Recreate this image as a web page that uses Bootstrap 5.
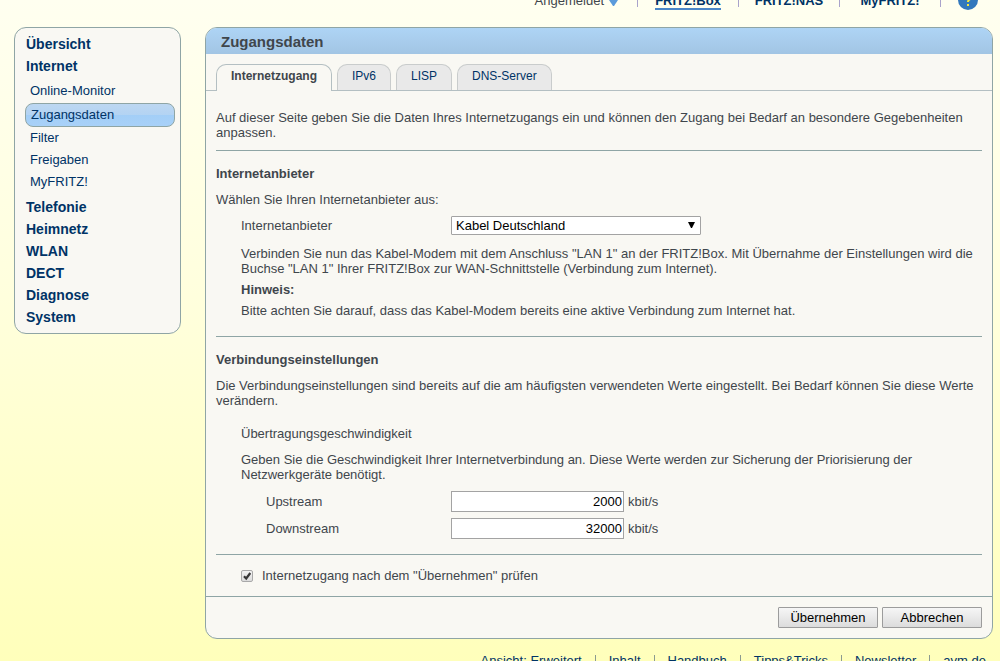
<!DOCTYPE html>
<html lang="de">
<head>
<meta charset="utf-8">
<meta name="viewport" content="width=device-width, initial-scale=1">
<title>FRITZ!Box – Zugangsdaten</title>
<link href="https://cdn.jsdelivr.net/npm/bootstrap@5.3.0/dist/css/bootstrap.min.css" rel="stylesheet">
<style>
  :root { --navy: #003366; --line: #8fa5a5; --panel: #f9f8f3; }
  html { height: 100%; }
  body {
    min-height: 100%;
    font: 13px/15px "Liberation Sans", Arial, sans-serif;
    color: #3f464c;
    background: #ffffbb linear-gradient(#fffff0, #ffffdd 45%, #ffffbb) no-repeat;
    overflow: hidden;
  }
  a { color: var(--navy); text-decoration: none; }
  a:hover { text-decoration: underline; }
  p { margin: 0; }

  /* top bar, scrolled partly out of view */
  .top-bar { height: 37px; margin-top: -10px; padding-right: 22px; }
  .top-bar .divider { width: 1px; height: 14px; margin-top: 3px; background: #a9a3cb; }
  .top-bar .current { border-bottom: 2px solid #4a86c8; }
  .top-item { padding-top: 3px; }
  .top-cell { width: 100px; }
  .user-link { color: #3f464c; padding-right: 18px; }
  .help-link { line-height: 0; padding-left: 17px; }

  .page-row { padding: 0 7px 0 14px; gap: 24px; }
  .box { background: var(--panel); border: 1px solid var(--line); border-radius: 12px; }

  /* side menu */
  .side-menu { width: 167px; padding: 5px 5px 5px 10px; }
  .side-menu a { display: block; height: 22px; line-height: 22px; }
  .side-menu .main-entry { font-size: 14px; font-weight: bold; padding-left: 1px; }
  .side-menu .sub-entries { padding: 3px 0; }
  .side-menu .sub-entries a { padding-left: 5px; }
  .side-menu .sub-entries a.current {
    height: 24px;
    margin-top: 1px;
    border: 1px solid var(--line);
    border-radius: 8px;
    background: linear-gradient(#bdd7f1, #b3d3f3 50%, #a3cef7 50%, #a8d1f8);
  }

  /* content */
  .page-title {
    margin: 0; padding: 1px 15px 0;
    font-size: 15px; line-height: 25px; font-weight: bold;
    border-radius: 11px 11px 0 0;
    background: linear-gradient(#aed4f5, #a2c5e4);
  }
  .tab-strip { gap: 5px; padding: 10px 10px 0; border-bottom: 1px solid #b4bfc2; font-size: 12px; }
  .tab-strip .nav-link {
    height: 26px; padding: 4px 14px;
    color: var(--navy); background: #e9e9e9;
    border: 1px solid #c9cccc; border-bottom: 0;
    border-radius: 10px 10px 0 0;
  }
  .tab-strip .nav-link.active {
    height: 27px; margin-bottom: -1px;
    color: #3f464c; background: var(--panel); border-color: #b4bfc2;
    font-weight: bold;
  }
  .panel-body { padding: 19px 10px 13px; }
  .panel-body hr { margin: 0; border-top: 1px solid var(--line); opacity: 1; }
  .panel-body h2 { margin: 0; padding: 15px 0 11px; font-size: 13px; line-height: 15px; font-weight: bold; }
  .intro { padding-bottom: 10px; }
  .indent { padding-left: 25px; }
  .provider-block { padding-top: 9px; padding-bottom: 18px; }
  .provider-row { padding-bottom: 11px; }
  .hint-stack { gap: 6px; }
  .speed-block { padding-top: 18px; padding-bottom: 15px; }
  .speed-title { padding-bottom: 11px; }
  .speed-rows { padding-top: 9px; gap: 6px; }
  .verify-row { padding-top: 13px; gap: 9px; }
  .label-wide { width: 210px; }
  .label-narrow { width: 185px; }

  .provider-select {
    width: 250px; height: 19px; padding: 0 4px;
    font-size: 13px; line-height: 17px; color: #000;
    border: 1px solid #a3a3a3; border-radius: 1px; background-color: #fff;
    background-image: url("data:image/svg+xml,%3Csvg xmlns='http://www.w3.org/2000/svg' width='7' height='6'%3E%3Cpath d='M0 0h7L4 6H3z'/%3E%3C/svg%3E");
    background-repeat: no-repeat; background-size: 7px 6px; background-position: right 5px top 5px;
    appearance: none;
  }
  .speed-input {
    width: 173px; height: 21px; padding: 1px;
    color: #000; text-align: right;
    border: 1px solid #a3a3a3; background: #fff;
  }
  .check-box {
    width: 12px; height: 12px; margin: 0; appearance: none;
    border: 1px solid #a9a9a9; border-radius: 2px;
    background: linear-gradient(#f2f2f2, #dcdcdc);
  }
  .check-box:checked {
    background: url("data:image/svg+xml,%3Csvg xmlns='http://www.w3.org/2000/svg' width='10' height='10'%3E%3Cpath d='M2 5.2l2.2 2.3L8.3 2' fill='none' stroke='%23383838' stroke-width='2.2'/%3E%3C/svg%3E") center no-repeat, linear-gradient(#f2f2f2, #dcdcdc);
  }
  .button-bar { gap: 4px; padding: 10px; border-top: 1px solid var(--line); }
  .form-button {
    width: 100px; height: 21px; padding: 0;
    font-size: 13px; line-height: 19px; color: #000;
    border: 1px solid #9c9c9c; border-radius: 1px;
    background: linear-gradient(#f6f6f6, #dcdcdc);
  }

  .footer-links { padding: 14px 14px 0; gap: 13px; }
  .footer-links .divider { width: 1px; height: 12px; margin-top: 2px; background: #8b9a90; }
</style>
</head>
<body>

<header class="top-bar d-flex justify-content-end align-items-start">
  <a href="#" class="top-item user-link d-flex">Angemeldet
    <svg class="ms-1" width="11" height="15" viewBox="0 0 11 15" aria-hidden="true"><path d="M1 5h9v2L6 13H5L1 7z" fill="#5b9bdb"/></svg>
  </a>
  <span class="divider"></span>
  <div class="top-cell d-flex justify-content-center"><a href="#" class="top-item current fw-bold">FRITZ!Box</a></div>
  <span class="divider"></span>
  <div class="top-cell d-flex justify-content-center"><a href="#" class="top-item fw-bold">FRITZ!NAS</a></div>
  <span class="divider"></span>
  <div class="top-cell d-flex justify-content-center"><a href="#" class="top-item fw-bold">MyFRITZ!</a></div>
  <span class="divider"></span>
  <a href="#" class="help-link" aria-label="Hilfe">
    <svg width="20" height="20" viewBox="0 0 20 20" aria-hidden="true"><circle cx="10" cy="10" r="10" fill="#3278bd"/><path d="M7 7a3 3 0 1 1 4.500 2.500Q10 10.200 10 12" fill="none" stroke="#f5ea3c" stroke-width="2"/><path d="M9 14h2v2H9z" fill="#f5ea3c"/></svg>
  </a>
</header>

<div class="page-row d-flex align-items-start">
  <nav class="side-menu box flex-shrink-0" aria-label="Hauptmenü">
    <a href="#" class="main-entry">Übersicht</a>
    <a href="#" class="main-entry">Internet</a>
    <div class="sub-entries">
      <a href="#">Online-Monitor</a>
      <a href="#" class="current" aria-current="page">Zugangsdaten</a>
      <a href="#">Filter</a>
      <a href="#">Freigaben</a>
      <a href="#">MyFRITZ!</a>
    </div>
    <a href="#" class="main-entry">Telefonie</a>
    <a href="#" class="main-entry">Heimnetz</a>
    <a href="#" class="main-entry">WLAN</a>
    <a href="#" class="main-entry">DECT</a>
    <a href="#" class="main-entry">Diagnose</a>
    <a href="#" class="main-entry">System</a>
  </nav>

  <main class="box flex-grow-1">
    <h1 class="page-title">Zugangsdaten</h1>
    <ul class="nav tab-strip">
      <li class="nav-item"><a class="nav-link active" href="#">Internetzugang</a></li>
      <li class="nav-item"><a class="nav-link" href="#">IPv6</a></li>
      <li class="nav-item"><a class="nav-link" href="#">LISP</a></li>
      <li class="nav-item"><a class="nav-link" href="#">DNS-Server</a></li>
    </ul>

    <form>
      <div class="panel-body">
        <p class="intro">Auf dieser Seite geben Sie die Daten Ihres Internetzugangs ein und können den Zugang bei Bedarf an besondere Gegebenheiten anpassen.</p>
        <hr>

        <h2>Internetanbieter</h2>
        <p>Wählen Sie Ihren Internetanbieter aus:</p>
        <div class="indent provider-block">
          <div class="provider-row d-flex align-items-center">
            <label class="label-wide" for="provider">Internetanbieter</label>
            <select class="provider-select" id="provider"><option>Kabel Deutschland</option></select>
          </div>
          <div class="hint-stack d-flex flex-column">
            <p>Verbinden Sie nun das Kabel-Modem mit dem Anschluss "LAN 1" an der FRITZ!Box. Mit Übernahme der Einstellungen wird die Buchse "LAN 1" Ihrer FRITZ!Box zur WAN-Schnittstelle (Verbindung zum Internet).</p>
            <p class="fw-bold">Hinweis:</p>
            <p>Bitte achten Sie darauf, dass das Kabel-Modem bereits eine aktive Verbindung zum Internet hat.</p>
          </div>
        </div>
        <hr>

        <h2>Verbindungseinstellungen</h2>
        <p>Die Verbindungseinstellungen sind bereits auf die am häufigsten verwendeten Werte eingestellt. Bei Bedarf können Sie diese Werte verändern.</p>
        <div class="indent speed-block">
          <p class="speed-title">Übertragungsgeschwindigkeit</p>
          <p>Geben Sie die Geschwindigkeit Ihrer Internetverbindung an. Diese Werte werden zur Sicherung der Priorisierung der Netzwerkgeräte benötigt.</p>
          <div class="indent speed-rows d-flex flex-column">
            <div class="d-flex align-items-center"><label class="label-narrow" for="up">Upstream</label><input class="speed-input" id="up" type="text" value="2000"><span class="ms-1">kbit/s</span></div>
            <div class="d-flex align-items-center"><label class="label-narrow" for="down">Downstream</label><input class="speed-input" id="down" type="text" value="32000"><span class="ms-1">kbit/s</span></div>
          </div>
        </div>
        <hr>
        <div class="indent verify-row d-flex align-items-center">
          <input class="check-box" id="verify" type="checkbox" checked>
          <label for="verify">Internetzugang nach dem "Übernehmen" prüfen</label>
        </div>
      </div>
      <div class="button-bar d-flex justify-content-end">
        <button type="submit" class="form-button">Übernehmen</button>
        <button type="button" class="form-button">Abbrechen</button>
      </div>
    </form>
  </main>
</div>

<footer class="footer-links d-flex justify-content-end">
  <a href="#">Ansicht: Erweitert</a><span class="divider"></span>
  <a href="#">Inhalt</a><span class="divider"></span>
  <a href="#">Handbuch</a><span class="divider"></span>
  <a href="#">Tipps&amp;Tricks</a><span class="divider"></span>
  <a href="#">Newsletter</a><span class="divider"></span>
  <a href="#">avm.de</a>
</footer>

<script src="https://cdn.jsdelivr.net/npm/bootstrap@5.3.0/dist/js/bootstrap.bundle.min.js"></script>
</body>
</html>
